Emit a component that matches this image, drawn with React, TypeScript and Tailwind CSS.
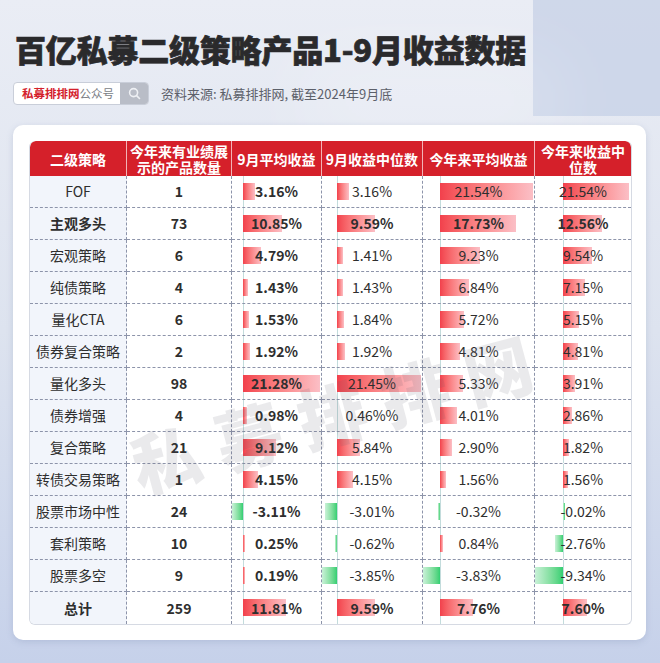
import React from "react";

type Row = { name: string; n: number; v: (number | null)[]; t: string[]; bold?: boolean };

const raw: [string, number, number[], boolean?][] = [
  ["FOF", 1, [3.16, 3.16, 21.54, 21.54]],
  ["主观多头", 73, [10.85, 9.59, 17.73, 12.56], true],
  ["宏观策略", 6, [4.79, 1.41, 9.23, 9.54]],
  ["纯债策略", 4, [1.43, 1.43, 6.84, 7.15]],
  ["量化CTA", 6, [1.53, 1.84, 5.72, 5.15]],
  ["债券复合策略", 2, [1.92, 1.92, 4.81, 4.81]],
  ["量化多头", 98, [21.28, 21.45, 5.33, 3.91]],
  ["债券增强", 4, [0.98, 0.46, 4.01, 2.86]],
  ["复合策略", 21, [9.12, 5.84, 2.9, 1.82]],
  ["转债交易策略", 1, [4.15, 4.15, 1.56, 1.56]],
  ["股票市场中性", 24, [-3.11, -3.01, -0.32, -0.02]],
  ["套利策略", 10, [0.25, -0.62, 0.84, -2.76]],
  ["股票多空", 9, [0.19, -3.85, -3.83, -9.34]],
  ["总计", 259, [11.81, 9.59, 7.76, 7.6], true],
];

const rows: Row[] = raw.map(([name, n, v, bold]) => {
  const t = v.map((x) => x.toFixed(2) + "%");
  const vv: (number | null)[] = [...v];
  if (name === "债券增强") {
    t[1] = "0.46%%";
    vv[1] = null;
  }
  return { name, n, v: vv, t, bold };
});

const widths = [97, 105, 90, 101, 112, 96];

const scales = [0, 1, 2, 3].map((j) => {
  const vals = raw.map((r) => r[2][j]);
  const min = Math.min(0, ...vals);
  const max = Math.max(...vals);
  const w = widths[j + 2] - 2;
  const s = w / (max - min);
  return { s, axis: -min * s };
});

function BarCell({ j, v, t, bold, last }: { j: number; v: number | null; t: string; bold: boolean; last: boolean }) {
  const { s, axis } = scales[j];
  const isLastCol = j === 3;
  return (
    <div
      className={
        "relative h-[32px] flex items-center justify-center border-[#8d94aa] " +
        (last ? "" : "border-b border-dashed ") +
        (isLastCol ? "" : "border-r border-dashed")
      }
    >
      <div className="absolute top-0 bottom-0 w-px bg-[#c3dcdc]" style={{ left: axis }} />
      {v !== null && v > 0 && (
        <div
          className="absolute top-[7px] h-[17px] bg-linear-to-r from-[#f2404c] to-[#fbbfc6]"
          style={{ left: axis, width: Math.max(1.5, v * s) }}
        />
      )}
      {v !== null && v < 0 && (
        <div
          className="absolute top-[7px] h-[17px] bg-linear-to-l from-[#2fcf72] to-[#c8f1d7]"
          style={{ left: axis + v * s, width: Math.max(1.5, -v * s) }}
        />
      )}
      <span className={"relative text-[14px] text-[#2e2e2e] " + (bold ? "font-bold" : "font-normal")}>{t}</span>
    </div>
  );
}

export default function App() {
  return (
    <div className="relative w-[660px] h-[663px] overflow-hidden bg-linear-to-b from-[#eaedf5] via-[#dde3ef] to-[#c6d1ea] font-['Noto_Sans_CJK_SC','Noto_Sans',sans-serif]">
      <div className="absolute right-0 top-0 w-[127px] h-[116px] bg-[#c3cee5]/70" />
      <div className="absolute left-[300px] top-[60px] w-[260px] h-[80px] bg-white/25 blur-2xl" />

      <div className="relative pl-[15px] pt-[32px]">
        <h1 className="text-[31px] leading-[34px] font-black text-[#2a2a2c] tracking-[-0.2px] [-webkit-text-stroke:0.7px_#2a2a2c]">
          百亿私募二级策略产品1-9月收益数据
        </h1>
      </div>

      <div className="relative flex items-center mt-[16px] pl-[13px]">
        <div className="flex h-[23px] w-[136px] rounded-[4px] border border-[#c9ced9] overflow-hidden bg-white">
          <div className="flex-1 flex items-center pl-[8px] text-[11.5px] leading-none">
            <span className="text-[#d4212c] font-bold">私募排排网</span>
            <span className="text-[#7a7d85]">公众号</span>
          </div>
          <div className="w-[28px] bg-[#b9bdc7] flex items-center justify-center">
            <svg width="13" height="13" viewBox="0 0 13 13" fill="none">
              <circle cx="5.6" cy="5.6" r="4" stroke="#eef0f4" strokeWidth="1.6" />
              <line x1="8.6" y1="8.6" x2="11.5" y2="11.5" stroke="#eef0f4" strokeWidth="1.6" strokeLinecap="round" />
            </svg>
          </div>
        </div>
        <span className="ml-[12px] text-[13px] text-[#5c606a]">资料来源: 私募排排网, 截至2024年9月底</span>
      </div>

      <div className="relative ml-[13px] mt-[20px] w-[633px] h-[515px] bg-white rounded-[10px] p-[16px] shadow-[0_2px_6px_rgba(120,135,170,0.25)]">
        <div className="w-[603px] rounded-[6px] overflow-hidden border border-[#d6dae3] border-t-0">
          <div className="grid grid-cols-[97px_105px_90px_101px_112px_96px] bg-[#d5202a] text-white font-bold text-[14px] leading-[16px] rounded-t-[6px]">
            {[
              <>二级策略</>,
              <>
                今年来有业绩展
                <br />
                示的产品数量
              </>,
              <>9月平均收益</>,
              <>9月收益中位数</>,
              <>今年来平均收益</>,
              <>
                今年来收益中
                <br />
                位数
              </>,
            ].map((h, i) => (
              <div
                key={i}
                className={
                  "h-[35px] flex items-center justify-center text-center " + (i < 5 ? "border-r border-[#f2b3b6]" : "")
                }
              >
                <span>{h}</span>
              </div>
            ))}
          </div>
          <div className="grid grid-cols-[97px_105px_90px_101px_112px_96px]">
            {rows.map((r, ri) => {
              const last = ri === rows.length - 1;
              const b = !!r.bold;
              return (
                <React.Fragment key={r.name}>
                  <div
                    className={
                      "h-[32px] flex items-center justify-center bg-[#f2f5fb] text-[14px] text-[#2e2e2e] border-r border-dashed border-[#8d94aa] " +
                      (last ? "" : "border-b ") +
                      (b ? "font-bold" : "font-normal")
                    }
                  >
                    {r.name}
                  </div>
                  <div
                    className={
                      "h-[32px] flex items-center justify-center text-[14px] font-bold text-[#2e2e2e] border-r border-dashed border-[#8d94aa] " +
                      (last ? "" : "border-b")
                    }
                  >
                    {r.n}
                  </div>
                  {r.v.map((v, j) => (
                    <BarCell key={j} j={j} v={v} t={r.t[j]} bold={b || j === 0} last={last} />
                  ))}
                </React.Fragment>
              );
            })}
          </div>
        </div>
      </div>

      <div className="pointer-events-none absolute left-[10px] top-[410px] w-[660px] flex justify-center">
        <div className="-translate-y-1/2 -rotate-[15deg] text-[68px] font-black tracking-[18px] text-[#5a5e6e]/[0.13] whitespace-nowrap">
          私募排排网
        </div>
      </div>
    </div>
  );
}
